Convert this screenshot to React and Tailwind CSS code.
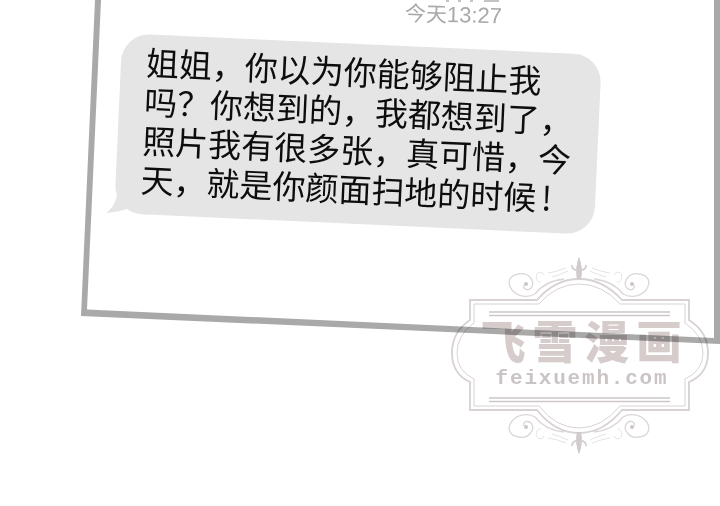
const cjk = 'font-["Noto_Sans_CJK_SC","Noto_Sans",sans-serif]';

const Frame = () => (
  <svg className="absolute inset-0" width="720" height="506" viewBox="0 0 720 506">
    <path fill="#a9a9a9" d="M95 0L81 316L720 344V0H714V338L87 309.500L101 0Z" />
    {/* bubble tail */}
    <path fill="#e5e5e5" d="M119 182Q118 205 106 213Q120 212 129 208Q134 212 148 215L150 182Z" />
    {/* cut off line above the time */}
    <path stroke="#c4c4c4" strokeWidth="2" d="M446 1h3M458 1h3M470 1h3M484 1h15" />
  </svg>
);

const Scroll = ({ flip, mirror }) => (
  <g transform={`translate(${mirror ? 1158 : 0} ${flip ? 711 : 0}) scale(${mirror ? -1 : 1} ${flip ? -1 : 1})`}>
    <path
      fill="none"
      stroke="#ddd7d7"
      strokeWidth="1.300"
      d="M564 279Q545 281 535 294C528 298 518 297 512 290C506 282 510 275 519 274C529 272 536 282 531 288C527 292 522 288 524 285"
    />
    <circle cx="526" cy="284" r="2" fill="#cdc6c6" />
    <path fill="none" stroke="#e6e2e2" strokeWidth="1" d="M548 273Q556 272 566 268M552 277Q560 275 568 271M544 275a4 5 0 1 0 -3 7" />
    <path fill="#d2cbcb" d="M579 257Q583 267 581 279H577Q575 267 579 257Z" />
    <path fill="none" stroke="#d6d0d0" strokeWidth="1.500" d="M577 270Q572 270 572 265M581 270Q586 270 586 265" />
  </g>
);

const Watermark = () => (
  <div className="absolute left-[450px] top-[250px] h-[210px] w-[270px] mix-blend-multiply">
    <svg className="absolute inset-0" width="270" height="210" viewBox="450 250 270 210">
      <g fill="none" stroke="#d8d2d2">
        <path
          strokeWidth="1.800"
          d="M470 300H537Q555 279 579 279Q603 279 622 300H689V320Q708 332 708 353Q708 374 689 382V410H622Q603 433 579 433Q555 433 537 410H470V382Q452 374 452 353Q452 332 470 320Z"
        />
        <path
          strokeWidth="1"
          d="M474 304H539Q556 284 579 284Q602 284 620 304H685V323Q703 335 703 353Q703 371 685 379V406H620Q602 428 579 428Q556 428 539 406H474V379Q457 371 457 353Q457 335 474 323Z"
        />
        <path strokeWidth="1.300" stroke="#cdc6c6" d="M489 312H670M489 315.500H670M489 398H670M489 401.500H670" />
      </g>
      <Scroll />
      <Scroll mirror />
      <Scroll flip />
      <Scroll flip mirror />
    </svg>
    <div className="absolute left-0 right-0 top-[62px] flex flex-col items-center pr-[1px]">
      <div className={`${cjk} text-[45px] font-black leading-[56px] tracking-[7px] text-[#d6cccc]`}>飞雪漫画</div>
      <div className='-mt-[1px] pr-[5px] font-["Liberation_Mono",monospace] text-[21px] font-bold leading-[24px] tracking-[1.800px] text-[#cbc4c4]'>
        feixuemh.com
      </div>
    </div>
  </div>
);

const App = () => {
  return (
    <div className={`${cjk} relative h-[506px] w-[720px] overflow-hidden bg-white`}>
      <Frame />
      <div className="relative ml-[405px] flex rotate-[1.500deg] items-baseline pt-[4px] text-[21px] leading-[24px] text-[#a9a9a9]">
        今天<span className='font-["Liberation_Sans",sans-serif] text-[22px]'>13:27</span>
      </div>
      <div className="relative ml-[118px] mt-[14px] h-[180px] w-[480px] rotate-[2.600deg] rounded-[28px] bg-[#e5e5e5] pl-[25px] pt-[8px] text-[33px] leading-[39px] text-[#0d0d0d]">
        <p>姐姐，你以为你能够阻止我</p>
        <p>吗？你想到的，我都想到了，</p>
        <p>照片我有很多张，真可惜，今</p>
        <p>
          天，就是你颜面扫地的时候<span className="ml-[5px]">!</span>
        </p>
      </div>
      <Watermark />
    </div>
  );
};

export default App;
